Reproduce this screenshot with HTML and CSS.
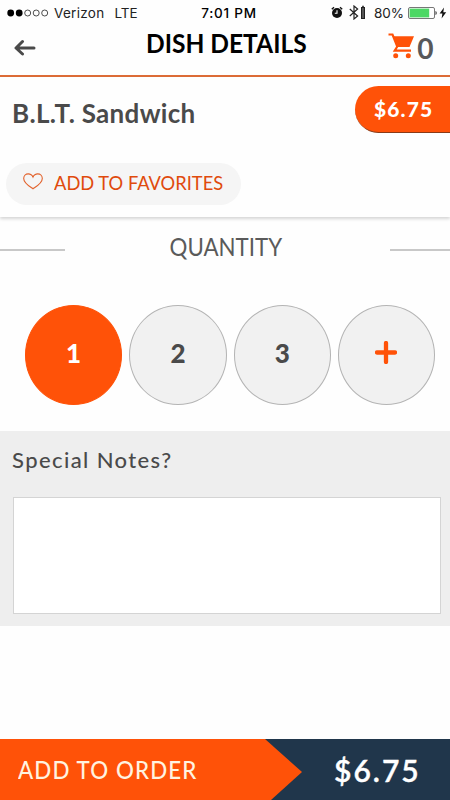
FILE: index.html
```html
<!DOCTYPE html>
<html lang="en">
<head>
    <meta charset="UTF-8">
    <meta name="viewport" content="width=device-width, initial-scale=1.0">
    <title>Dish Details</title>
    <link rel="stylesheet" href="styles.css">
</head>
<body>
    <div class="status-bar">
        <div class="status-left">
            <svg class="signal" width="42" height="8" viewBox="0 0 42 8">
                <circle cx="3.7" cy="4" r="3.4" fill="#000"/>
                <circle cx="12.2" cy="4" r="3.4" fill="#000"/>
                <g fill="none" stroke="#222" stroke-width="0.8">
                    <circle cx="20.7" cy="4" r="3"/>
                    <circle cx="29.2" cy="4" r="3"/>
                    <circle cx="37.7" cy="4" r="3"/>
                </g>
            </svg>
            <span class="carrier">Verizon</span>
            <span class="network">LTE</span>
        </div>
        <div class="status-time">7:01 PM</div>
        <div class="status-right">
            <svg class="alarm" width="12" height="13" viewBox="0 0 12 13">
                <circle cx="6" cy="7" r="5" fill="#111"/>
                <path d="M0.8 3.2 3 1.2M11.2 3.2 9 1.2" stroke="#111" stroke-width="1.4"/>
                <path d="M6 4.2V7.3H3.8" fill="none" stroke="#fff" stroke-width="1.1"/>
            </svg>
            <svg class="bluetooth" width="17" height="15" viewBox="0 0 17 15">
                <path d="M0.8 4 8.6 11 5 14V1L8.6 4 0.8 11" fill="none" stroke="#222" stroke-width="1.2"/>
                <rect x="12.5" y="2.5" width="3" height="11" fill="#555" stroke="#222"/>
                <path d="M13 1.3h2" stroke="#222"/>
            </svg>
            <span class="percent">80%</span>
            <svg class="battery" width="30" height="12" viewBox="0 0 30 12">
                <rect x="0.5" y="0.5" width="26" height="11" rx="1.5" fill="#fff" stroke="#777"/>
                <rect x="1.6" y="1.6" width="19.6" height="8.8" fill="#4cd864"/>
                <path d="M27.500 4c1.6 0.4 1.6 3.6 0 4z" fill="#333"/>
            </svg>
            <svg class="bolt" width="8" height="12" viewBox="0 0 8 12">
                <path d="M5 0.5 0.6 6.6H3.4L2.6 11.5 7.2 5.2H4.3z" fill="#111"/>
            </svg>
        </div>
    </div>

    <header class="header">
        <button class="back">
            <svg width="22" height="18" viewBox="0 0 22 18">
                <path d="M20 9H2.5M8.5 2.5 2 9l6.500 6" fill="none" stroke="#4a4a4a" stroke-width="3" stroke-linecap="round" stroke-linejoin="round"/>
            </svg>
        </button>
        <h1>DISH DETAILS</h1>
        <div class="cart">
            <svg width="26" height="26" viewBox="0 0 26 26">
                <path d="M0.5 1.500H4.500L9.300 13.500L6.700 17.700H23" fill="none" stroke="#ff5208" stroke-width="2.200"/>
                <path d="M5 3.200H26L21.500 14H9z" fill="#ff5208"/>
                <circle cx="7.700" cy="22.800" r="2.500" fill="#ff5208"/>
                <circle cx="20.300" cy="22.800" r="2.500" fill="#ff5208"/>
            </svg>
            <span class="cart-count">0</span>
        </div>
    </header>

    <section class="dish">
        <div class="dish-top">
            <h2>B.L.T. Sandwich</h2>
            <div class="price"><span>$6.75</span></div>
        </div>
        <button class="favorite">
            <svg width="20" height="17" viewBox="0 0 20 17">
                <path d="M10 15.800C6.500 13.300 0.700 10 0.700 5.400C0.700 2.700 2.800 0.900 5.200 0.900C7.300 0.900 9.200 2.200 10 4.100C10.800 2.200 12.700 0.900 14.800 0.900C17.200 0.900 19.300 2.700 19.300 5.400C19.300 10 13.500 13.300 10 15.800Z" fill="none" stroke="#e2622c" stroke-width="1.100"/>
            </svg>
            <span>ADD TO FAVORITES</span>
        </button>
    </section>

    <section class="quantity">
        <div class="quantity-title">
            <i class="line line-left"></i>
            <h3>QUANTITY</h3>
            <i class="line line-right"></i>
        </div>
        <div class="quantity-options">
            <button class="circle selected">1</button>
            <button class="circle">2</button>
            <button class="circle">3</button>
            <button class="circle">
                <svg width="22" height="23" viewBox="0 0 22 23">
                    <path d="M2 11.500h18M11 2v19" stroke="#ff5208" stroke-width="4.300" stroke-linecap="round"/>
                </svg>
            </button>
        </div>
    </section>

    <section class="notes">
        <label for="notes">Special Notes?</label>
        <textarea id="notes"></textarea>
    </section>

    <footer class="footer">
        <button class="add-order"><span>ADD TO ORDER</span></button>
        <div class="total"><span>$6.75</span></div>
    </footer>
</body>
</html>
```

FILE: styles.css
```css
* {
    box-sizing: border-box;
}

body {
    margin: 0;
    height: 800px;
    display: flex;
    flex-direction: column;
    overflow: hidden;
    background: #fefefe;
    color: #4a4a4a;
    font-family: Lato, "Open Sans", sans-serif;
}

h1, h2, h3 {
    margin: 0;
    white-space: nowrap;
}

button {
    border: 0;
    padding: 0;
    background: none;
    font-family: inherit;
    cursor: pointer;
}

svg {
    display: block;
    flex-shrink: 0;
}

span {
    display: inline-block;
    white-space: nowrap;
}

/* status bar */
.status-bar {
    height: 25px;
    display: grid;
    grid-template-columns: 1fr auto 1fr;
    align-items: center;
    padding: 0 3px 0 7px;
    font-family: Inter, sans-serif;
    font-size: 13.5px;
    color: #222;
}

.status-left,
.status-right {
    display: flex;
    align-items: center;
}

.status-right {
    justify-content: flex-end;
}

.carrier {
    margin-left: 5px;
    letter-spacing: 0.3px;
}

.network {
    margin-left: 10px;
}

.status-time {
    padding-left: 4px;
    font-weight: 500;
    color: #000;
    letter-spacing: 0.75px;
}

.bluetooth {
    margin-left: 6px;
}

.percent {
    margin-left: 8px;
}

.battery {
    margin-left: 4px;
}

.bolt {
    margin-left: 1px;
}

/* header */
.header {
    height: 52px;
    display: grid;
    grid-template-columns: 1fr auto 1fr;
    padding: 0 16px 0 14px;
    border-bottom: 2px solid #dd6c37;
}

.back {
    justify-self: start;
    align-self: start;
    margin-top: 14px;
}

.header h1 {
    color: #000;
    font-size: 27px;
    line-height: 35px;
    font-weight: 700;
    transform: translateX(2px) scaleX(0.91);
}

.cart {
    justify-self: end;
    display: flex;
    align-items: flex-start;
    padding-top: 8px;
}

.cart-count {
    margin-left: 3px;
    font-size: 29px;
    line-height: 29px;
    font-weight: 700;
    color: #58585a;
    transform: scaleX(0.97);
}

/* dish */
.dish {
    height: 140px;
    padding-top: 9px;
    box-shadow: 0 2px 3px rgba(0, 0, 0, 0.16);
}

.dish-top {
    display: flex;
    justify-content: space-between;
    height: 47px;
}

.dish h2 {
    padding-left: 12px;
    font-size: 26px;
    line-height: 54px;
    font-weight: 700;
    letter-spacing: 0.3px;
}

.price {
    width: 95px;
    height: 47px;
    padding-left: 19px;
    border-radius: 24px 0 0 24px;
    border-bottom: 1px solid #8a3a17;
    background: #ff5208;
    color: #fff;
    font-size: 21px;
    line-height: 46px;
    font-weight: 900;
    letter-spacing: 1.1px;
}

.favorite {
    display: flex;
    align-items: center;
    width: 235px;
    height: 42px;
    margin: 30px 0 0 6px;
    padding-left: 17px;
    border-radius: 21px;
    background: #f5f5f5;
    color: #e04a0c;
    font-size: 20px;
}

.favorite svg {
    margin-top: -5px;
}

.favorite span {
    margin: -5px 0 0 11px;
    transform: scaleX(0.915);
    transform-origin: left;
}

/* quantity */
.quantity {
    height: 214px;
}

.quantity-title {
    display: flex;
    justify-content: space-between;
    align-items: center;
    height: 62px;
}

.quantity-title h3 {
    font-size: 24.5px;
    font-weight: 400;
    color: #5a5a5a;
    margin-top: -4px;
    transform: translateX(-2px) scaleX(0.91);
}

.line {
    height: 2px;
    margin-top: 3px;
    background: #c8c8c8;
}

.line-left {
    width: 65px;
}

.line-right {
    width: 60px;
}

.quantity-options {
    display: flex;
    gap: 7px;
    padding: 26px 0 0 25px;
}

.circle {
    display: flex;
    justify-content: center;
    align-items: center;
    width: 97.3px;
    height: 100px;
    padding-bottom: 5px;
    border: 1px solid #b4b4b4;
    border-radius: 50%;
    background: #f1f1f1;
    color: #4a4a4a;
    font-size: 26px;
    font-weight: 900;
}

.circle svg {
    margin-right: 2px;
}

.circle.selected {
    border-color: #ff5208;
    background: #ff5208;
    color: #fff;
}

/* notes */
.notes {
    height: 195px;
    padding: 13px 9px 0 12px;
    background: #eee;
}

.notes label {
    display: block;
    height: 53px;
    font-size: 22px;
    line-height: 32px;
    font-weight: 500;
    letter-spacing: 1.4px;
}

.notes textarea {
    display: block;
    width: 428px;
    height: 117px;
    margin-left: 1px;
    border: 1px solid #d4d4d4;
    background: #fff;
    resize: none;
    outline: none;
}

/* footer */
.footer {
    display: flex;
    height: 61px;
    margin-top: auto;
    background: #20364b;
}

.add-order {
    width: 302px;
    padding-left: 18px;
    background: #ff5208;
    clip-path: polygon(0 0, 265px 0, 302px 33px, 271px 61px, 0 61px);
    color: #fff3e0;
    font-size: 24px;
    font-weight: 500;
    text-align: left;
    letter-spacing: 1.2px;
}

.add-order span {
    transform: scaleX(0.93);
    transform-origin: left;
}

.total {
    padding-left: 32px;
    color: #fff;
    font-size: 30px;
    line-height: 62px;
    font-weight: 600;
    letter-spacing: 2px;
    -webkit-text-stroke: 0.4px #fff;
}
```
